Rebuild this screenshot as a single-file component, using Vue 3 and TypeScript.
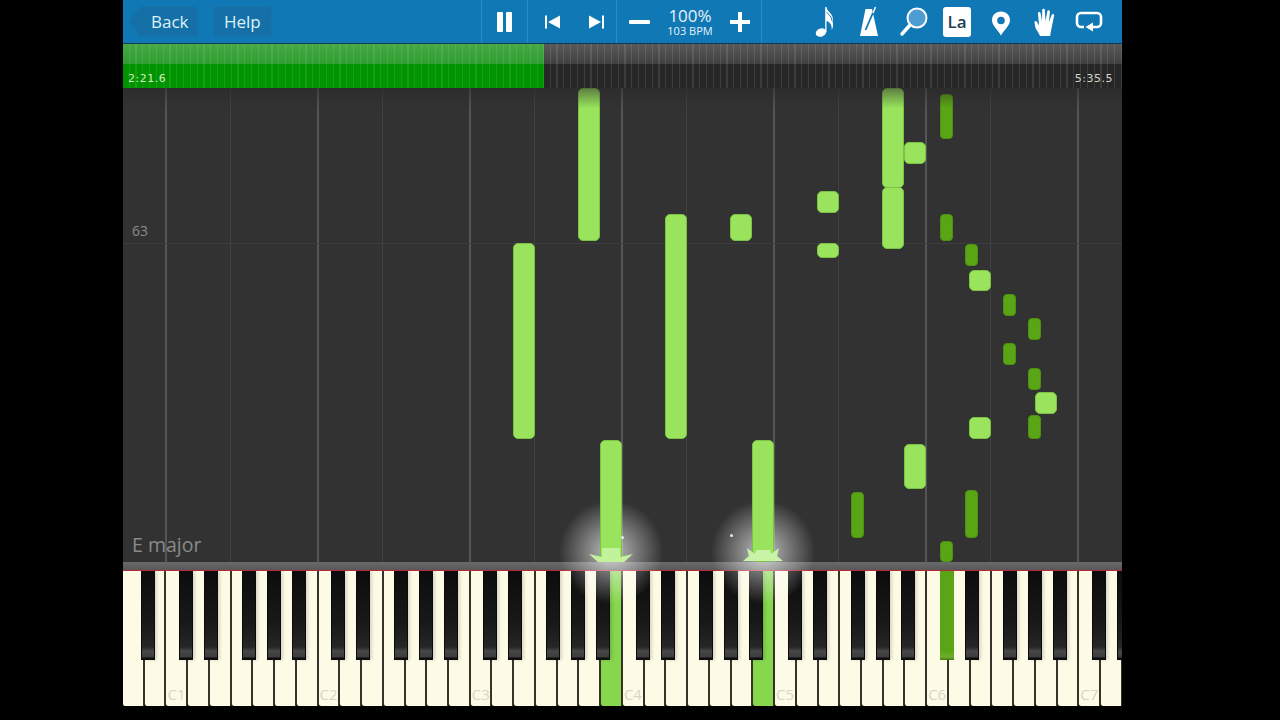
<script setup lang="ts">
interface Note {
  x: number
  y: number
  w: number
  h: number
  dark?: boolean
}

const OCTAVE = 152.2
const C1_X = 42
const BLACK_OFFSETS = [14, 39, 77, 102, 127]

// piano roll notes, written in screenshot px and moved into the roll area (x - 123, y - 88)
const rawNotes: [number, number, number, number, boolean?][] = [
  [578, 88, 22, 153],
  [513, 243, 22, 196],
  [665, 214, 22, 225],
  [730, 214, 22, 27],
  [817, 191, 22, 22],
  [817, 243, 22, 15],
  [882, 187, 22, 62],
  [882, 88, 22, 100],
  [904, 142, 22, 22],
  [969, 270, 22, 21],
  [1035, 392, 22, 22],
  [969, 417, 22, 22],
  [904, 444, 22, 45],
  [600, 440, 22, 122],
  [752, 440, 22, 122],
  [940, 94, 13, 45, true],
  [940, 214, 13, 27, true],
  [965, 244, 13, 22, true],
  [1003, 294, 13, 22, true],
  [1028, 318, 13, 22, true],
  [1003, 343, 13, 22, true],
  [1028, 368, 13, 22, true],
  [1028, 415, 13, 24, true],
  [851, 492, 13, 46, true],
  [965, 490, 13, 48, true],
  [940, 541, 13, 21, true],
]

const notes: Note[] = rawNotes.map(([x, y, w, h, dark]) => ({ x: x - 123, y: y - 88, w, h, dark }))

const octaveLines = [0, 1, 2, 3, 4, 5, 6].map((i) => C1_X + i * 152)
const fifthLines = [0, 1, 2, 3, 4, 5, 6].map((i) => C1_X + 65 + i * 152).filter((x) => x < 999)

const labels: Record<number, string> = { 2: 'C1', 9: 'C2', 16: 'C3', 23: 'C4', 30: 'C5', 37: 'C6', 44: 'C7' }
const pressedWhite = [22, 29]

const whites = Array.from({ length: 47 }, (_, i) => ({
  id: i,
  label: labels[i] ?? '',
  pressed: pressedWhite.includes(i),
}))

const blacks: { x: number; pressed: boolean }[] = [{ x: 18, pressed: false }]
for (let o = 0; o < 7; o++) {
  for (const off of BLACK_OFFSETS) {
    const x = Math.round(C1_X + o * OCTAVE + off)
    if (x < 999) blacks.push({ x, pressed: o === 5 && off === 14 })
  }
}
</script>

<template>
  <div class="page">
    <div class="app">
      <header class="toolbar">
        <div class="left-buttons">
          <button class="tb-btn back" type="button">Back</button>
          <button class="tb-btn" type="button">Help</button>
        </div>

        <div class="group pause-group">
          <svg width="20" height="22" viewBox="0 0 20 22">
            <rect x="2" y="1" width="6" height="20" rx="1" fill="#fff" />
            <rect x="11" y="1" width="6" height="20" rx="1" fill="#fff" />
          </svg>
        </div>

        <div class="group skip-group">
          <svg width="16" height="14" viewBox="0 0 16 14">
            <rect x="0" y="0.5" width="2" height="13" fill="#fff" />
            <path d="M15 0.5v13L3 7z" fill="#fff" />
          </svg>
          <svg width="16" height="14" viewBox="0 0 16 14">
            <path d="M1 0.5v13L13 7z" fill="#fff" />
            <rect x="14" y="0.5" width="2" height="13" fill="#fff" />
          </svg>
        </div>

        <div class="group tempo-group">
          <span class="minus" />
          <div class="tempo">
            <span class="tempo-pct">100%</span>
            <span class="tempo-bpm">103 BPM</span>
          </div>
          <span class="plus" />
        </div>

        <div class="tools">
          <span class="tool">
            <svg width="24" height="34" viewBox="0 0 24 34">
              <ellipse cx="8" cy="27.500" rx="5.400" ry="4.100" transform="rotate(-22 8 27.500)" fill="#fff" />
              <path d="M12.200 27V2h1.300c.3 2.600 1.600 3.800 3.200 5.400 2.500 2.500 3.900 5.400 2.900 9.400 1 3 .4 6-.9 8.200.3-3-.6-5.400-2-7-.9-1-1.800-1.600-3.200-2V27z" fill="#fff" />
              <path d="M13.500 7.500c1.600 1 3.200 2.700 4.300 4.600.6 1 1 2.400 1.100 3.600" fill="none" stroke="#1078b4" stroke-width="1" />
            </svg>
          </span>
          <span class="tool">
            <svg width="24" height="32" viewBox="0 0 24 32">
              <path d="M8.500 3h6.500l6 27H3z" fill="#fff" />
              <path d="M8.500 24L18.500 1" stroke="#1078b4" stroke-width="1.800" fill="none" />
              <path d="M18.500 1l-2.500 6" stroke="#fff" stroke-width="1.500" fill="none" />
            </svg>
          </span>
          <span class="tool">
            <svg width="30" height="32" viewBox="0 0 30 32">
              <circle cx="19" cy="12" r="9.500" fill="#4d9dd3" stroke="#fff" stroke-width="2" />
              <path d="M12 19L4 28" stroke="#fff" stroke-width="3.400" stroke-linecap="round" />
            </svg>
          </span>
          <span class="tool">
            <span class="la">La</span>
          </span>
          <span class="tool">
            <svg class="pin" width="20" height="25" viewBox="0 0 20 25">
              <path d="M10 .5C4.800.5 1 4.300 1 9.300c0 5.500 6.200 10 9 15.200 2.800-5.200 9-9.700 9-15.200C19 4.300 15.200.5 10 .5z" fill="#fff" />
              <circle cx="10" cy="9.500" r="3.800" fill="#1078b4" />
            </svg>
          </span>
          <span class="tool">
            <svg width="22" height="30" viewBox="0 0 22 30">
              <path
                d="M6 29c-1-3-3-5-4.500-8L.5 15.500c-.3-1.500 1.700-2 2.300-.7L5 18.500 4 6.500c-.1-1.800 2.300-2 2.600-.2L8 14 8.200 3.200c0-1.900 2.600-1.900 2.700 0L11.500 14 13.300 4.500c.3-1.800 2.800-1.400 2.600.4L15 15l2.700-7c.6-1.600 2.800-.9 2.400.8L18 19c-.6 3.500-1.400 6-1.800 10z"
                fill="#fff"
              />
            </svg>
          </span>
          <span class="tool">
            <svg width="28" height="22" viewBox="0 0 28 22">
              <path
                d="M9 16H6a4 4 0 0 1-4-4V6a4 4 0 0 1 4-4h16a4 4 0 0 1 4 4v6a4 4 0 0 1-4 4h-5"
                fill="none"
                stroke="#fff"
                stroke-width="2.600"
              />
              <path d="M18 11.500v9l-7.500-4.500z" fill="#fff" />
            </svg>
          </span>
        </div>
      </header>

      <div class="progress">
        <div class="progress-done" />
        <div class="progress-rest" />
        <span class="time time-left">2:21.6</span>
        <span class="time time-right">5:35.5</span>
      </div>

      <div class="roll">
        <span
          v-for="x in fifthLines"
          :key="`f${x}`"
          class="vline minor"
          :style="{ left: `${x}px` }"
        />
        <span
          v-for="x in octaveLines"
          :key="`o${x}`"
          class="vline major"
          :style="{ left: `${x}px` }"
        />
        <span class="hline" />
        <span class="measure">63</span>
        <span class="key-sig">E major</span>

        <span
          v-for="(n, i) in notes"
          :key="i"
          class="note"
          :class="{ dark: n.dark }"
          :style="{ left: `${n.x}px`, top: `${n.y}px`, width: `${n.w}px`, height: `${n.h}px` }"
        />

        <svg class="spark spark-a" width="44" height="16" viewBox="0 0 44 16">
          <path d="M0 8l13 3V2h18v9l13-3-9 8H9z" fill="#c3f29c" />
        </svg>
        <svg class="spark spark-b" width="44" height="20" viewBox="0 0 44 20">
          <path d="M2 19l6-5-2-8 8 6 1-4h14l1 4 8-6-2 8 6 5z" fill="#c9f3a6" />
        </svg>
        <span class="dot dot-a" />
        <span class="dot dot-b" />
        <span class="roll-shade" />
      </div>

      <div class="rail" />

      <div class="keyboard">
        <div class="whites">
          <div
            v-for="k in whites"
            :key="k.id"
            class="white"
            :class="{ pressed: k.pressed }"
          >
            <span v-if="k.label" class="key-label">{{ k.label }}</span>
          </div>
        </div>
        <div
          v-for="b in blacks"
          :key="b.x"
          class="black"
          :class="{ pressed: b.pressed }"
          :style="{ left: `${b.x}px` }"
        />
      </div>

      <span class="glow glow-a" />
      <span class="glow glow-b" />
    </div>
  </div>
</template>

<style>
html,
body {
  background: #000;
}
</style>

<style scoped>
.page {
  width: 1280px;
  height: 720px;
  padding-left: 123px;
  box-sizing: border-box;
  background: #000;
  overflow: hidden;
}

.app {
  position: relative;
  width: 999px;
  height: 707px;
  display: flex;
  flex-direction: column;
  overflow: hidden;
  font-family: "Open Sans", "Liberation Sans", sans-serif;
}

/* toolbar */
.toolbar {
  flex: none;
  height: 43px;
  display: flex;
  align-items: stretch;
  background: #1078b4;
  border-bottom: 1px solid #0b3a57;
  color: #fff;
}

.left-buttons {
  width: 358px;
  box-sizing: border-box;
  padding: 6px 0 0 6px;
  display: flex;
  gap: 15px;
  align-items: flex-start;
}

.tb-btn {
  height: 31px;
  padding: 0 10px;
  border: 1px solid #1474ab;
  border-radius: 4px;
  background: #1470a6;
  color: #dff1fb;
  font: 17px "Open Sans", sans-serif;
}

.back {
  width: 69px;
  padding-left: 21px;
  text-align: left;
  border-radius: 2px 4px 4px 2px;
  clip-path: polygon(12px 0, 100% 0, 100% 100%, 12px 100%, 0 50%);
}

.group {
  display: flex;
  align-items: center;
  justify-content: center;
  border-left: 1px solid #2a8cc6;
  box-sizing: border-box;
}

.pause-group {
  width: 46px;
}

.skip-group {
  width: 89px;
  padding-left: 4px;
  gap: 27px;
}

.tempo-group {
  width: 146px;
  border-right: 1px solid #2a8cc6;
  padding: 0 11px 0 12px;
  justify-content: space-between;
}

.minus {
  width: 21px;
  height: 4px;
  background: #fff;
  border-radius: 1px;
}

.plus {
  width: 20px;
  height: 20px;
  background:
    linear-gradient(#fff, #fff) center / 20px 4px no-repeat,
    linear-gradient(#fff, #fff) center / 4px 20px no-repeat;
}

.tempo {
  display: flex;
  flex-direction: column;
  align-items: center;
  line-height: 1;
  color: #e6f3fb;
}

.tempo-pct {
  font-size: 17px;
}

.tempo-bpm {
  font-size: 11px;
  margin-top: 1px;
}

.tools {
  flex: 1;
  display: grid;
  grid-template-columns: repeat(7, 44px);
  padding-left: 41px;
}

.tool {
  display: flex;
  align-items: center;
  justify-content: center;
}

.pin {
  margin-top: 3px;
}

.la {
  width: 28px;
  height: 30px;
  display: flex;
  align-items: center;
  justify-content: center;
  background: #fff;
  border-radius: 3px;
  color: #1d3f55;
  font: 600 17px "Open Sans", sans-serif;
}

/* progress strip */
.progress {
  position: relative;
  flex: none;
  height: 44px;
  display: flex;
}

.progress-done {
  width: 421px;
  background:
    repeating-linear-gradient(90deg, transparent 0 5.600px, rgba(255, 255, 255, 0.09) 5.600px 6.800px),
    linear-gradient(#45a845 0, #2f9e2f 20px, #009400 20px, #009400 100%);
}

.progress-rest {
  flex: 1;
  background:
    repeating-linear-gradient(90deg, transparent 0 5.600px, rgba(255, 255, 255, 0.1) 5.600px 6.800px),
    linear-gradient(#585858 0, #404040 20px, #262626 20px, #262626 100%);
}

.time {
  position: absolute;
  bottom: 3px;
  color: #cfd8c8;
  font: 11px "DejaVu Sans", sans-serif;
  letter-spacing: 0.5px;
}

.time-left {
  left: 5px;
  color: #cdeec0;
}

.time-right {
  right: 9px;
}

/* piano roll */
.roll {
  position: relative;
  flex: none;
  height: 474px;
  background: #323232;
  overflow: hidden;
}

.roll-shade {
  position: absolute;
  z-index: 3;
  left: 0;
  right: 0;
  top: 0;
  height: 20px;
  background: linear-gradient(rgba(40, 40, 40, 0.55), rgba(40, 40, 40, 0));
}

.vline {
  position: absolute;
  top: 0;
  bottom: 0;
}

.major {
  width: 2px;
  background: #555;
}

.minor {
  width: 1px;
  background: #414141;
}

.hline {
  position: absolute;
  left: 0;
  right: 0;
  top: 155px;
  height: 1px;
  background: #3d3d3d;
}

.measure {
  position: absolute;
  left: 9px;
  top: 133px;
  color: #8a8a8a;
  font-size: 14px;
}

.key-sig {
  position: absolute;
  left: 9px;
  top: 444px;
  color: #8a8a8a;
  font-size: 19.500px;
  line-height: 25px;
}

.note {
  position: absolute;
  z-index: 2;
  box-sizing: border-box;
  background: #99e35d;
  border: 1px solid #7cc244;
  border-radius: 5px;
}

.note.dark {
  background: #5aa515;
  border-color: #4c9210;
  border-radius: 4px;
}

.spark {
  position: absolute;
  z-index: 2;
}

.spark-a {
  left: 466px;
  top: 458px;
}

.spark-b {
  left: 618px;
  top: 454px;
}

.dot {
  position: absolute;
  z-index: 2;
  width: 3px;
  height: 3px;
  border-radius: 50%;
  background: #e8e8e8;
}

.dot-a {
  left: 498px;
  top: 448px;
}

.dot-b {
  left: 607px;
  top: 446px;
}

.rail {
  flex: none;
  height: 8px;
  background: linear-gradient(#6a6a6a, #585858);
  border-bottom: 1px solid #b8283a;
}

/* keyboard */
.keyboard {
  position: relative;
  flex: none;
  height: 135px;
  overflow: hidden;
}

.whites {
  display: flex;
  height: 100%;
}

.white {
  position: relative;
  flex: none;
  box-sizing: border-box;
  width: 21.743px;
  height: 100%;
  background: #fdfbe6;
  border-right: 2px solid #35332a;
  border-radius: 0 0 2px 2px;
}

.white.pressed {
  background: #86d64e;
}

.key-label {
  position: absolute;
  left: 1px;
  bottom: 3px;
  color: #d8d6c4;
  font-size: 15px;
  line-height: 18px;
}

.black {
  position: absolute;
  top: 0;
  width: 14px;
  height: 89px;
  background: linear-gradient(#0c0c0c 0, #191919 60%, #262626 76px, #474747 80px, #3c3c3c 86px, #0d0d0d 87px);
  box-shadow: inset 1px 0 #0b0b0b, inset -1px 0 #0b0b0b, 2px 0 3px rgba(0, 0, 0, 0.15);
}

.black.pressed {
  background: linear-gradient(#5aa515, #5aa515 80px, #6fae30 86px, #3f7a0c 89px);
  box-shadow: none;
}

/* note glow, sits under the notes but over the keys */
.glow {
  position: absolute;
  z-index: 1;
  top: 500px;
  width: 104px;
  height: 104px;
  border-radius: 50%;
  background: radial-gradient(closest-side, rgba(255, 255, 255, 0.7), rgba(255, 255, 255, 0.38) 45%, transparent 100%);
  pointer-events: none;
}

.glow-a {
  left: 436px;
}

.glow-b {
  left: 588px;
}
</style>
